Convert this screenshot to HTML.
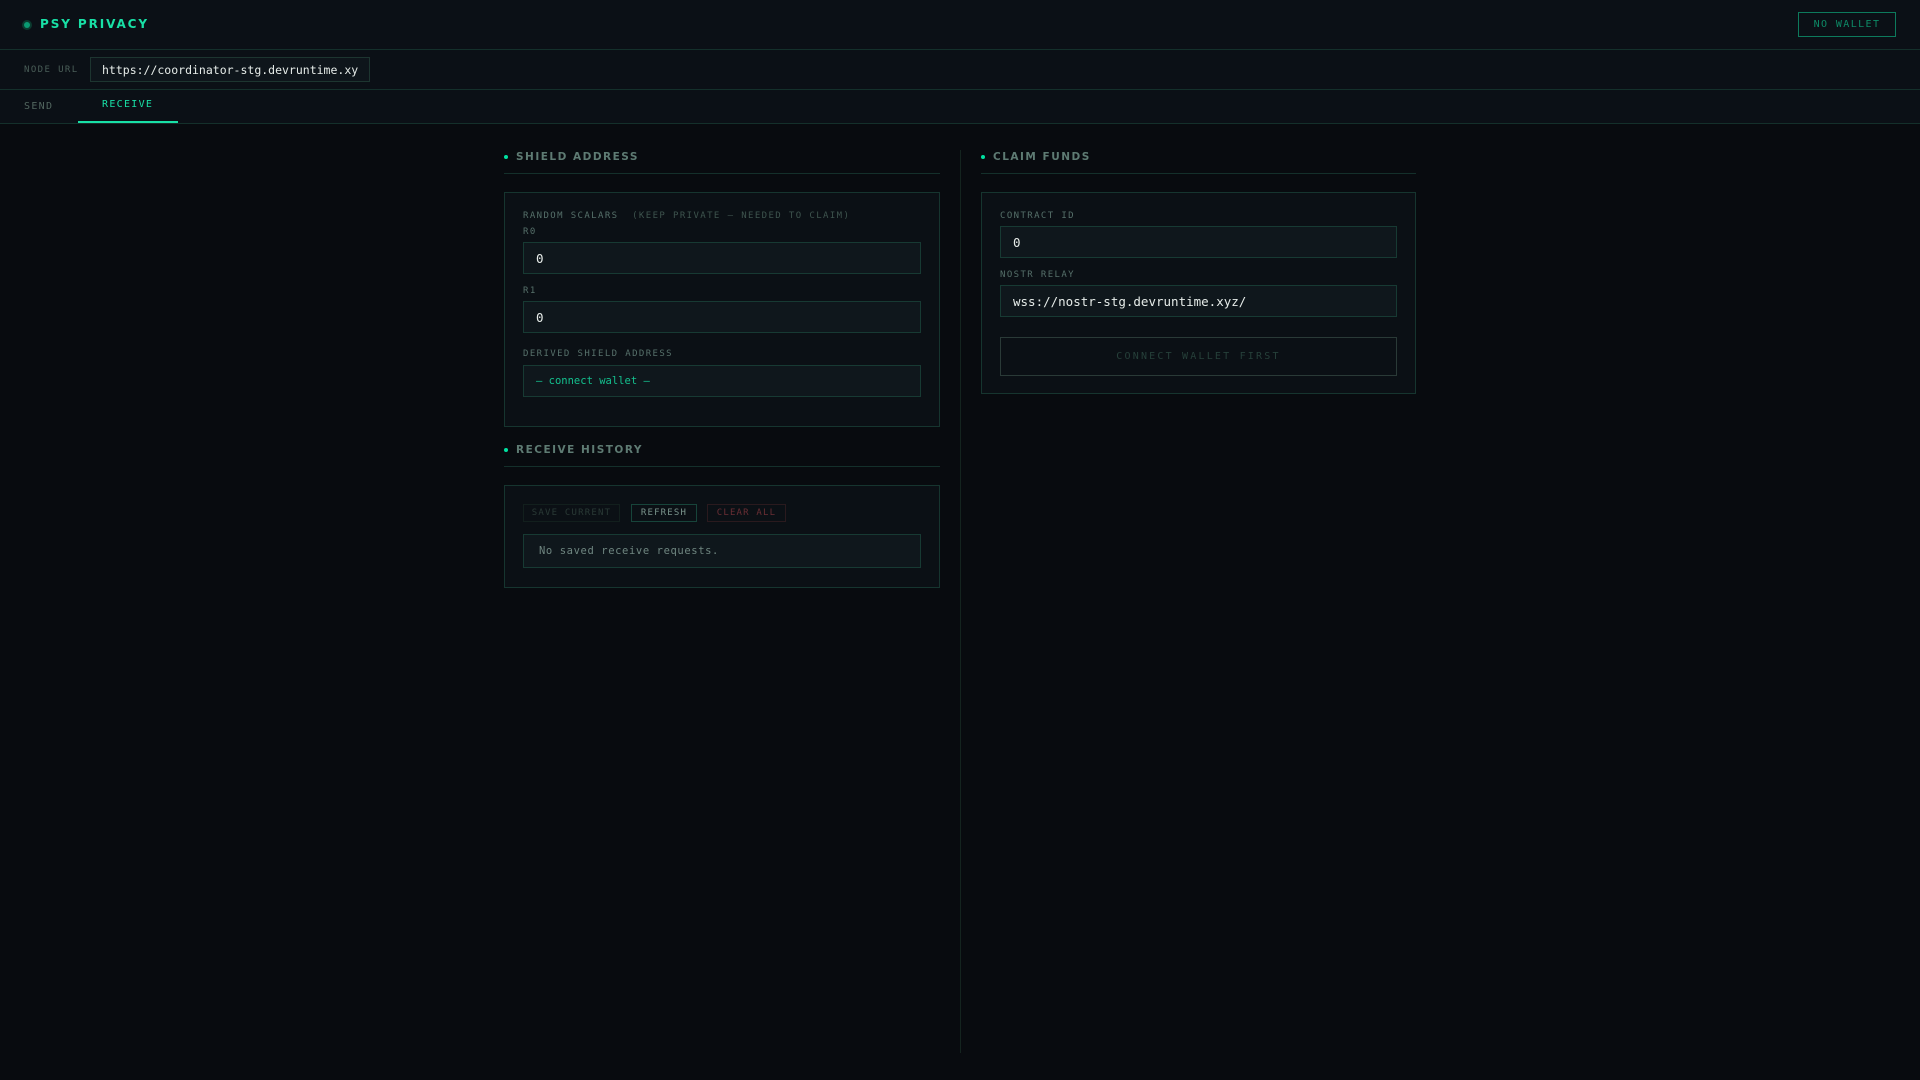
<!DOCTYPE html>
<html><head><style>
*{margin:0;padding:0;box-sizing:border-box}
body{width:1920px;height:1080px;background:#080b0f;font-family:"DejaVu Sans Mono","Liberation Mono",monospace;color:#c8d4d0;position:relative;overflow:hidden}
.a{position:absolute}
.hdr{left:0;top:0;width:1920px;height:123px;background:#0b1016}
.line{background:#14302b;height:1px}
.sans{font-family:"DejaVu Sans","Liberation Sans",sans-serif;font-weight:bold}
.lbl{font-size:9px;letter-spacing:1.4px;color:#56706a;white-space:nowrap}
.inp{border:1px solid #173a33;background:#0f171c;color:#e6ece9;font-size:12.5px;padding-left:12px;display:flex;align-items:center;white-space:nowrap}
.card{border:1px solid #16352f;background:#0b1015}
.h{font-size:10.5px;letter-spacing:1.5px;color:#5e7b73}
.dot{width:4px;height:4px;background:#00e0a0;border-radius:50%}
.btn{display:flex;align-items:center;justify-content:center;white-space:nowrap}
</style></head><body>
<div class="a hdr"></div>
<div class="a" style="left:22px;top:20px;width:10px;height:10px;border-radius:50%;background:#0b3a2e"></div>
<div class="a" style="left:24px;top:22px;width:6px;height:6px;border-radius:50%;background:#0a9a72"></div>
<div class="a sans" style="left:40px;top:17px;font-size:12px;letter-spacing:1.9px;color:#18e0a6">PSY PRIVACY</div>
<div class="a btn" style="left:1798px;top:12px;width:98px;height:25px;border:1px solid #0d7a5c;color:#0d8a66;font-size:10px;letter-spacing:1.4px">NO WALLET</div>
<div class="a line" style="left:0;top:49px;width:1920px"></div>
<div class="a lbl" style="left:24px;top:65px;color:#4a5e58">NODE URL</div>
<div class="a inp" style="left:90px;top:57px;width:280px;height:25px;background:#0e151b;border-color:#1d3530;font-size:11.5px;padding-left:11px">https://coordinator-stg.devruntime.xy</div>
<div class="a line" style="left:0;top:89px;width:1920px"></div>
<div class="a" style="left:24px;top:101px;font-size:10px;letter-spacing:1.3px;color:#52665f">SEND</div>
<div class="a" style="left:102px;top:99px;font-size:10px;letter-spacing:1.3px;color:#18e0a6">RECEIVE</div>
<div class="a" style="left:78px;top:121px;width:100px;height:2px;background:#18e0a6"></div>
<div class="a line" style="left:0;top:123px;width:1920px"></div>

<div class="a" style="left:960px;top:150px;width:1px;height:903px;background:#14241f"></div>

<div class="a dot" style="left:504px;top:155px"></div>
<div class="a sans h" style="left:516px;top:151px">SHIELD ADDRESS</div>
<div class="a line" style="left:504px;top:173px;width:436px"></div>
<div class="a card" style="left:504px;top:192px;width:436px;height:235px"></div>
<div class="a lbl" style="left:523px;top:211px">RANDOM SCALARS &nbsp;<span style="color:#3e544e">(KEEP PRIVATE — NEEDED TO CLAIM)</span></div>
<div class="a lbl" style="left:523px;top:227px">R0</div>
<div class="a inp" style="left:523px;top:242px;width:398px;height:32px">0</div>
<div class="a lbl" style="left:523px;top:286px">R1</div>
<div class="a inp" style="left:523px;top:301px;width:398px;height:32px">0</div>
<div class="a lbl" style="left:523px;top:349px">DERIVED SHIELD ADDRESS</div>
<div class="a inp" style="left:523px;top:365px;width:398px;height:32px;color:#14c08e;font-size:10.5px">— connect wallet —</div>

<div class="a dot" style="left:504px;top:448px"></div>
<div class="a sans h" style="left:516px;top:444px">RECEIVE HISTORY</div>
<div class="a line" style="left:504px;top:466px;width:436px"></div>
<div class="a card" style="left:504px;top:485px;width:436px;height:103px"></div>
<div class="a btn" style="left:523px;top:504px;width:97px;height:18px;border:1px solid #121f1d;color:#2a3a36;font-size:9px;letter-spacing:1.2px">SAVE CURRENT</div>
<div class="a btn" style="left:631px;top:504px;width:66px;height:18px;border:1px solid #17443a;color:#7a948c;font-size:9px;letter-spacing:1.2px">REFRESH</div>
<div class="a btn" style="left:707px;top:504px;width:79px;height:18px;border:1px solid #2a1a1e;color:#6a2e34;font-size:9px;letter-spacing:1.2px">CLEAR ALL</div>
<div class="a inp" style="left:523px;top:534px;width:398px;height:34px;color:#6f8680;font-size:10.5px;padding-left:15px;letter-spacing:0.6px">No saved receive requests.</div>

<div class="a dot" style="left:981px;top:155px"></div>
<div class="a sans h" style="left:993px;top:151px">CLAIM FUNDS</div>
<div class="a line" style="left:981px;top:173px;width:435px"></div>
<div class="a card" style="left:981px;top:192px;width:435px;height:202px"></div>
<div class="a lbl" style="left:1000px;top:211px">CONTRACT ID</div>
<div class="a inp" style="left:1000px;top:226px;width:397px;height:32px">0</div>
<div class="a lbl" style="left:1000px;top:270px">NOSTR RELAY</div>
<div class="a inp" style="left:1000px;top:285px;width:397px;height:32px">wss://nostr-stg.devruntime.xyz/</div>
<div class="a btn" style="left:1000px;top:337px;width:397px;height:39px;border:1px solid #2a3a37;color:#26403a;font-size:10px;letter-spacing:2.2px">CONNECT WALLET FIRST</div>
</body></html>
